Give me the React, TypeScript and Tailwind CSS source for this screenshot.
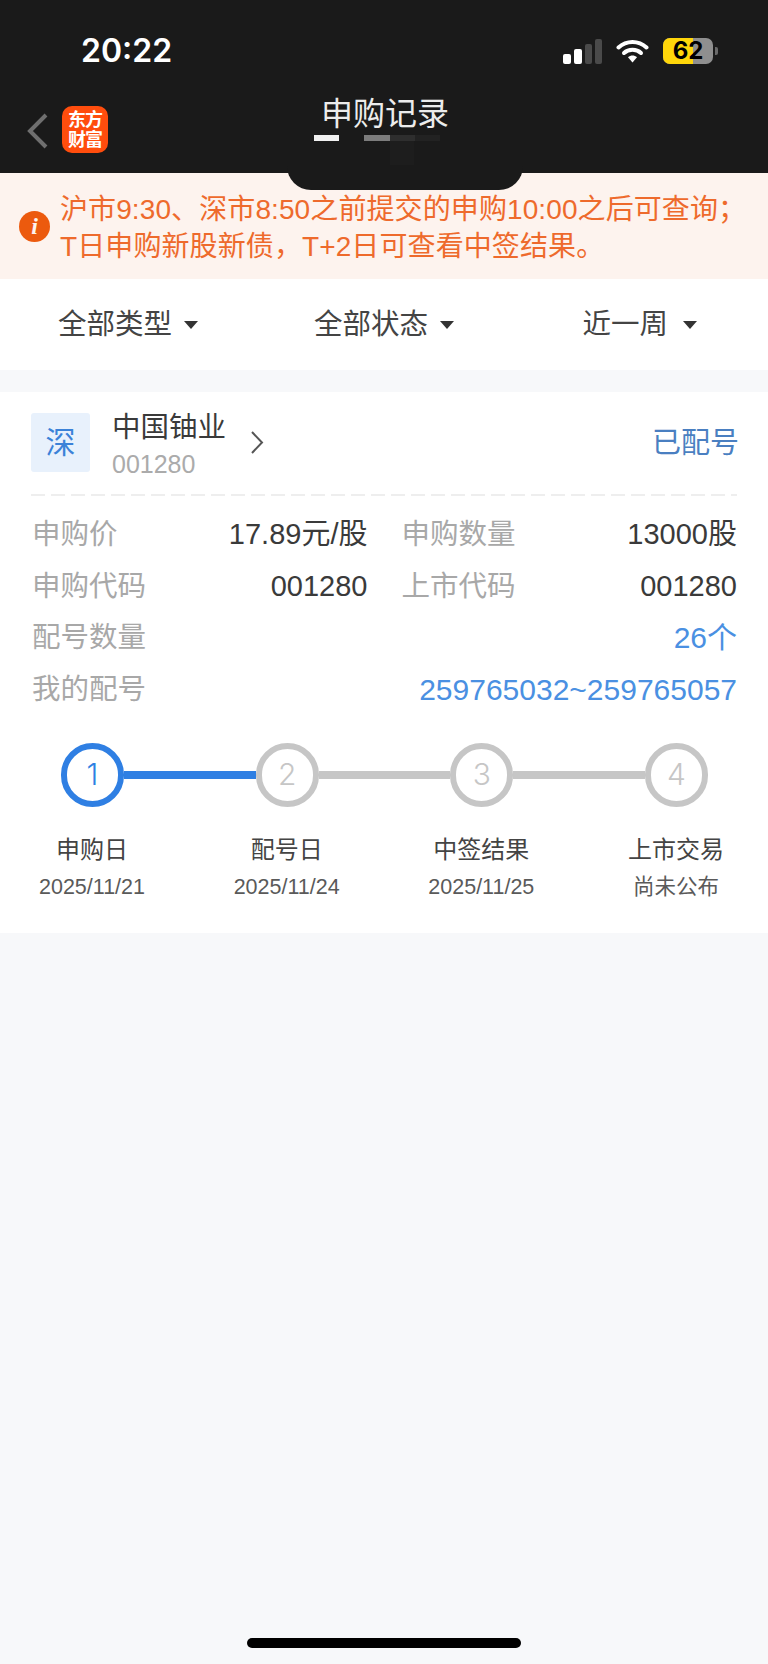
import React from "react";

function Signal() {
  return (
    <div className="flex items-end gap-[3px] h-[25px]">
      <div className="w-[8px] h-[10px] rounded-[2px] bg-white" />
      <div className="w-[8px] h-[15px] rounded-[2px] bg-white" />
      <div className="w-[7px] h-[20px] rounded-[2px] bg-[#4a4a4a]" />
      <div className="w-[7px] h-[25px] rounded-[2px] bg-[#4a4a4a]" />
    </div>
  );
}

function Wifi() {
  return (
    <svg width="33" height="24" viewBox="0 0 33 24" fill="none">
      <path d="M2.5 8.5C10.5 1 22.5 1 30.5 8.5" stroke="#fff" strokeWidth="4" strokeLinecap="round" />
      <path d="M8 14C12.5 9.7 20.5 9.7 25 14" stroke="#fff" strokeWidth="4" strokeLinecap="round" />
      <path d="M12 18.2L16.5 23.5L21 18.2C18.5 15.8 14.5 15.8 12 18.2Z" fill="#fff" />
    </svg>
  );
}

function Battery() {
  return (
    <div className="flex items-center gap-[2px]">
      <div className="relative flex h-[26px] w-[50px] items-center justify-center rounded-[7px] bg-[#8f8f8f]">
        <div className="absolute inset-y-0 left-0 w-[30px] rounded-l-[7px] bg-[#ffd60a]" />
        <span className="relative font-['Inter',sans-serif] text-[24px] font-bold leading-[26px] text-black">62</span>
      </div>
      <div className="h-[8px] w-[3px] rounded-r-[2px] bg-[#6a6a6a]" />
    </div>
  );
}

function Caret() {
  return <div className="h-0 w-0 border-x-[7px] border-t-[8px] border-x-transparent border-t-[#333]" />;
}

function Filter({ label, wide }: { label: string; wide?: boolean }) {
  return (
    <div className={wide ? "flex items-center gap-[15px]" : "flex items-center gap-[12px]"}>
      <span className="text-[28.5px] leading-none text-[#444]">{label}</span>
      <Caret />
    </div>
  );
}

function Cell({ label, value, blue }: { label: string; value: string; blue?: boolean }) {
  return (
    <div className="flex items-center justify-between">
      <span className="text-[28.5px] text-[#a8a8a8]">{label}</span>
      <span className={blue ? "text-[30px] text-[#4a90e2]" : "text-[29px] text-[#3a3a3a]"}>{value}</span>
    </div>
  );
}

function Circle({ n, active }: { n: number; active?: boolean }) {
  return (
    <div
      className={
        active
          ? "flex h-[64px] w-[63px] shrink-0 items-center justify-center rounded-full border-[6px] border-[#2f7fe3] font-['Inter',sans-serif] text-[30px] font-light text-[#2f7fe3]"
          : "flex h-[64px] w-[63px] shrink-0 items-center justify-center rounded-full border-[6px] border-[#c6c6c6] font-['Inter',sans-serif] text-[30px] font-light text-[#c6c6c6]"
      }
    >
      {n}
    </div>
  );
}

function Step({ title, date }: { title: string; date: string }) {
  return (
    <div className="flex w-[140px] flex-col items-center">
      <span className="text-[24px] leading-[30px] text-[#444]">{title}</span>
      <span className="mt-[9px] text-[21.5px] leading-[26px] text-[#5a5a5a]">{date}</span>
    </div>
  );
}

export default function App() {
  return (
    <div className="relative flex h-[1664px] w-[768px] flex-col overflow-hidden bg-[#f7f8fa] font-['Liberation_Sans','Noto_Sans_CJK_SC',sans-serif]">
      {/* dark header */}
      <header className="h-[173px] shrink-0 bg-[#1a1a1a]">
        <div className="flex h-[90px] items-center pl-[81px] pr-[50px] pt-[12px]">
          <span className="font-['Inter',sans-serif] text-[32px] font-semibold leading-none text-white">20:22</span>
          <div className="ml-auto flex items-center gap-[14px]">
            <Signal />
            <Wifi />
            <Battery />
          </div>
        </div>
        <div className="relative flex h-[83px] pl-[27px]">
          <svg width="22" height="36" viewBox="0 0 22 36" fill="none" className="mt-[23px]">
            <path d="M19 2L3 18L19 34" stroke="#6f6f6f" strokeWidth="4" />
          </svg>
          <div className="ml-[13px] mt-[16px] flex h-[47px] w-[46px] flex-col items-center justify-center rounded-[10px] bg-[#ff4d0d] text-[18px] font-bold leading-[20px] tracking-[-1px] text-white">
            <span>东方</span>
            <span>财富</span>
          </div>
          <div className="absolute left-[314px] top-[6px] flex flex-col">
            <span className="ml-[7px] whitespace-nowrap text-[32px] leading-[36px] text-[#ececec]">申购记录</span>
            <div className="mt-[3px] flex h-[6px]">
              <div className="w-[25px] bg-[#f0f0f0]" />
              <div className="ml-[25px] w-[26px] bg-[#7c7c7c]" />
              <div className="w-[25px] bg-[#2e2e2e]" />
              <div className="w-[25px] bg-[#222]" />
            </div>
          </div>
          <div className="absolute left-[390px] top-[51px] h-[26px] w-[24px] bg-[#1d1d1d]" />
        </div>
      </header>

      {/* notch-like overlay */}
      <div className="absolute left-[287px] top-[165px] h-[25px] w-[236px] rounded-b-[24px] bg-[#1a1a1a]" />

      {/* notice */}
      <section className="flex h-[106px] shrink-0 items-center bg-[#fdf3ee] pl-[19px]">
        <div className="flex h-[31px] w-[31px] shrink-0 items-center justify-center rounded-full bg-[#ec5a0e] font-['Liberation_Serif',serif] text-[24px] font-bold italic leading-none text-[#fdf3ee]">
          i
        </div>
        <p className="ml-[10px] whitespace-nowrap pt-[3px] text-[28px] leading-[37px] tracking-[0.1px] text-[#ee6a2c]">
          沪市9:30、深市8:50之前提交的申购10:00之后可查询；
          <br />
          T日申购新股新债，T+2日可查看中签结果。
        </p>
      </section>

      {/* filters */}
      <nav className="flex h-[91px] shrink-0 items-center bg-white pl-[58px] pr-[71px]">
        <Filter label="全部类型" />
        <div className="ml-[116px]">
          <Filter label="全部状态" />
        </div>
        <div className="ml-auto">
          <Filter label="近一周" wide />
        </div>
      </nav>

      {/* record card */}
      <section className="mt-[22px] h-[541px] shrink-0 bg-white">
        <div className="mx-[31px] flex h-[102px] items-start pt-[21px]">
          <div className="flex h-[59px] w-[59px] items-center justify-center rounded-[3px] bg-[#e8f1fc] text-[30px] text-[#3b82d8]">
            深
          </div>
          <div className="ml-[22px] flex flex-col">
            <span className="mt-[-4px] text-[28.5px] leading-[36px] text-[#3a3a3a]">中国铀业</span>
            <span className="mt-[4px] text-[25px] leading-[30px] text-[#ababab]">001280</span>
          </div>
          <svg width="14" height="25" viewBox="0 0 14 25" fill="none" className="ml-[24px] mt-[17px]">
            <path d="M2 2L12 12.5L2 23" stroke="#555" strokeWidth="2" />
          </svg>
          <span className="ml-auto mr-[-2px] mt-[12px] text-[29px] leading-[36px] text-[#4a7fc1]">已配号</span>
        </div>
        <div className="mx-[31px] h-[2px] bg-[repeating-linear-gradient(90deg,#eeeeee_0,#eeeeee_14px,transparent_14px,transparent_20px)]" />

        <div className="ml-[32px] mr-[31px] mt-[13px] grid grid-cols-2 gap-x-[34px] leading-[51.7px]">
          <Cell label="申购价" value="17.89元/股" />
          <Cell label="申购数量" value="13000股" />
          <Cell label="申购代码" value="001280" />
          <Cell label="上市代码" value="001280" />
          <div className="col-span-2">
            <Cell label="配号数量" value="26个" blue />
          </div>
          <div className="col-span-2">
            <Cell label="我的配号" value="259765032~259765057" blue />
          </div>
        </div>

        <div className="mt-[27px] flex items-center pl-[61px] pr-[60px]">
          <Circle n={1} active />
          <div className="h-[8px] flex-1 bg-[#2f7fe3]" />
          <Circle n={2} />
          <div className="h-[8px] flex-1 bg-[#c6c6c6]" />
          <Circle n={3} />
          <div className="h-[8px] flex-1 bg-[#c6c6c6]" />
          <Circle n={4} />
        </div>

        <div className="mt-[28px] flex justify-between px-[22px]">
          <Step title="申购日" date="2025/11/21" />
          <Step title="配号日" date="2025/11/24" />
          <Step title="中签结果" date="2025/11/25" />
          <Step title="上市交易" date="尚未公布" />
        </div>
      </section>

      {/* home indicator */}
      <div className="mb-[16px] mt-auto flex justify-center">
        <div className="h-[10px] w-[274px] rounded-full bg-black" />
      </div>
    </div>
  );
}
